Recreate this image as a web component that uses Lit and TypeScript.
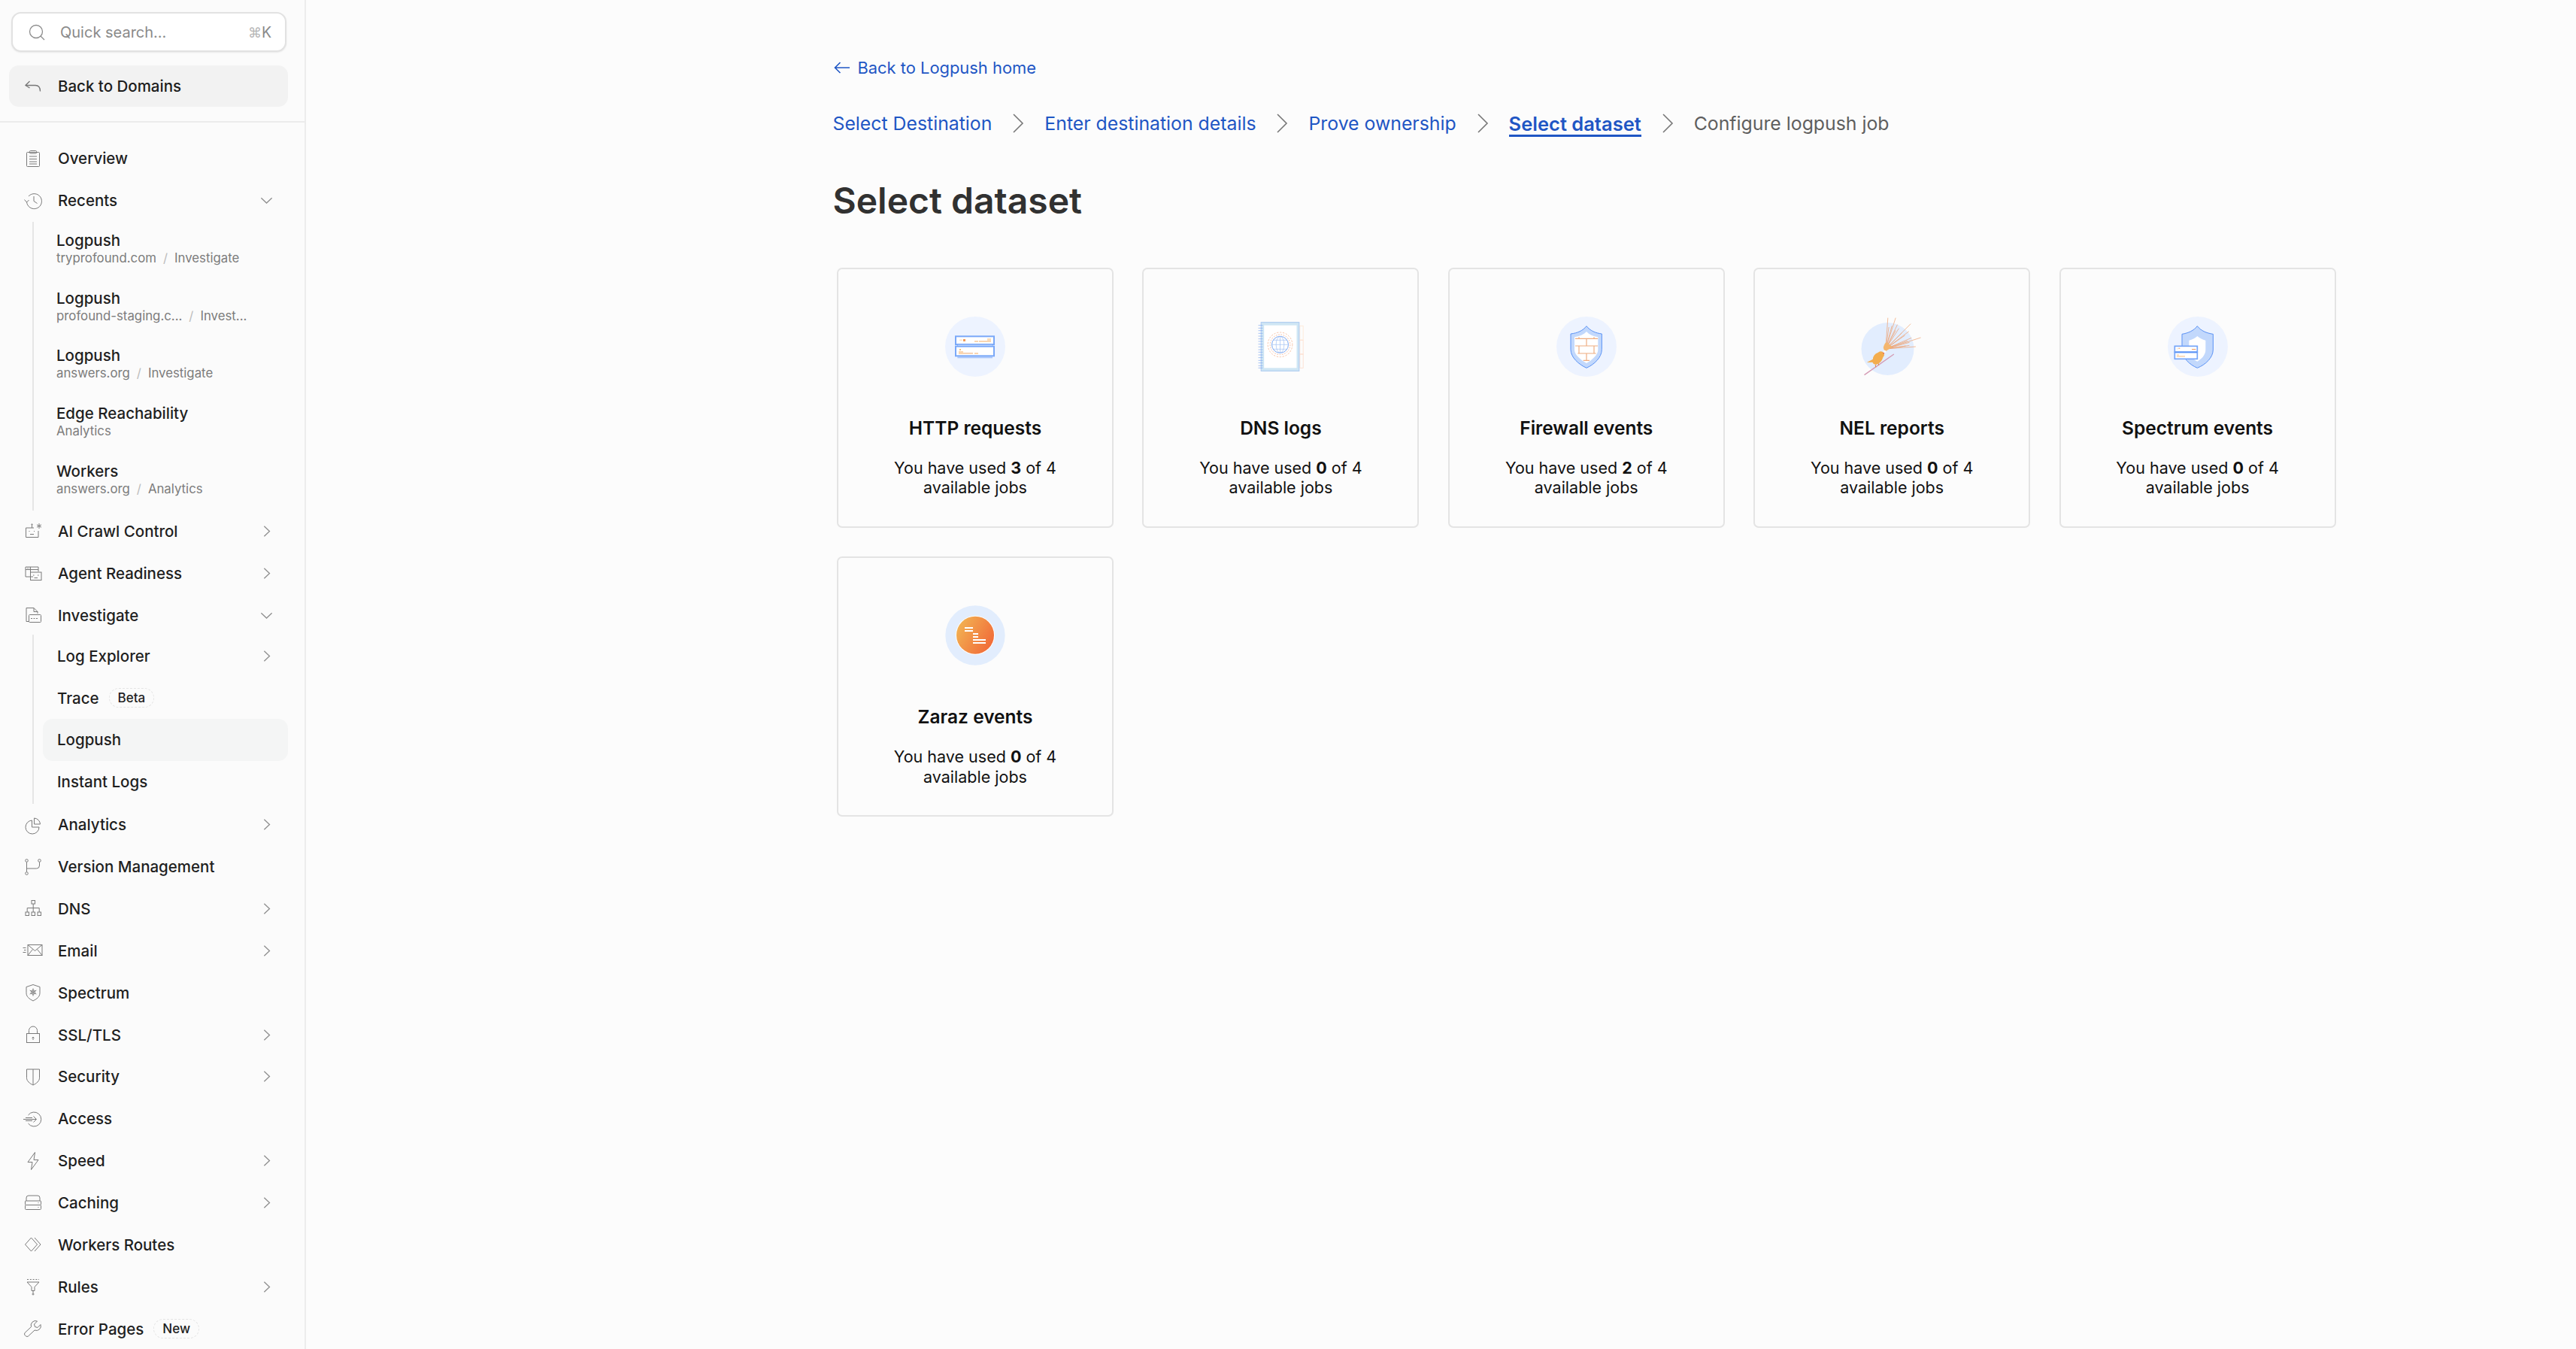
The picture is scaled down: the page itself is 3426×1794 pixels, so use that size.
import { LitElement, html, css, svg } from "lit";
import { customElement } from "lit/decorators.js";

const ICONS: Record<string, any> = {
  overview: svg`<rect x="5.5" y="5.5" width="17" height="19" rx="1"/><rect x="9.5" y="3.5" width="9" height="3.5" rx="1"/><path d="M9 11h10M9 14.5h10M9 18h10M9 21h10"/>`,
  recents: svg`<path d="M5.5 15.5A10 10 0 1 0 8 8"/><path d="M2.5 12.5l3 3.5 3-3"/><path d="M15 8v6.5l4.5 3"/>`,
  ai: svg`<path d="M15 9H4.5v12.5H21V13"/><path d="M12.5 5v4"/><circle cx="12.5" cy="4.5" r=".7"/><path d="M8.5 13.5h1M15 13.5h1M10 17.5h5"/><path d="M22 3v7M19 4.8l6 3.4M25 4.8l-6 3.4"/>`,
  agent: svg`<path d="M14 19H4V6h17v6"/><path d="M4 9.5h17"/><path d="M6 7.8h4" stroke-dasharray="1 1"/><rect x="10.500" y="13" width="14.500" height="10.500"/><path d="M14 17h1.500M20 17h1.500M15.500 20.500h4.500"/><path d="M10.500 6v7"/>`,
  investigate: svg`<path d="M9 22.500H5V4.500h10l5 5V12"/><path d="M15 4.500v5h5"/><rect x="8.500" y="13.500" width="16" height="10" rx="1"/><path d="M11 18.500h9" stroke-dasharray="2 1.500"/>`,
  analytics: svg`<path d="M12.500 8A9 9 0 1 0 22 17H12.500z"/><path d="M15.500 5a8.500 8.500 0 0 1 8 8h-8z"/>`,
  version: svg`<circle cx="5.500" cy="5.500" r="1.800"/><circle cx="5.500" cy="22.500" r="1.800"/><circle cx="22.500" cy="5.500" r="1.800"/><path d="M5.500 7.500v13M5.500 16h13q4 0 4-4V7.500"/>`,
  dns: svg`<rect x="12" y="3.500" width="4.500" height="4.500"/><rect x="4" y="19" width="4.500" height="4.500"/><rect x="12" y="19" width="4.500" height="4.500"/><rect x="20" y="19" width="4.500" height="4.500"/><path d="M14.200 8v11M6.200 19v-5.500h16V19"/>`,
  email: svg`<rect x="7" y="6.500" width="19" height="14"/><path d="M7 6.500l9.500 8 9.500-8M7 20.500l6.500-8M26 20.500l-6.500-8"/><path d="M0.500 10.500h4M2 13.500h2.500M0.500 16.500h4"/>`,
  spectrum: svg`<path d="M14 3.500l9 3v8c0 5-4 8-9 10.500-5-2.500-9-5.500-9-10.500v-8z"/><path d="M14 8.500v10M9.700 11l8.600 5M18.300 11l-8.600 5" stroke-width="1"/><circle cx="14" cy="13.500" r="2.800" stroke-width=".8"/>`,
  ssl: svg`<rect x="5.500" y="12.500" width="17" height="12"/><path d="M8.500 12.500V8.500a5.500 5.500 0 0 1 11 0v4"/><path d="M14 21v-3.500"/><path d="M12.500 18.500l1.500-1.500 1.500 1.500" stroke-width="1"/>`,
  security: svg`<path d="M5.500 4h17v11.500c0 4-4 7.500-8.500 9.500-4.500-2-8.500-5.500-8.500-9.500z"/><path d="M14 4v21"/>`,
  access: svg`<path d="M7.500 9a9.500 9.500 0 1 1 0 11"/><path d="M1 14.500h17"/><path d="M14.500 10.500l4 4-4 4"/><path d="M4 12.500h9M4 16.500h9"/>`,
  speed: svg`<path d="M16.500 2.500L7 15.500h6l-1.500 10 9.500-13h-6z"/>`,
  caching: svg`<path d="M5 12V8q0-3 3-3h12q3 0 3 3v4"/><rect x="3.500" y="12" width="21" height="5.500" rx="1"/><rect x="3.500" y="17.500" width="21" height="6" rx="1"/><path d="M20.500 14.700h1M20.500 20.500h1"/>`,
  routes: svg`<path d="M11.500 5L3.500 14l8 9"/><path d="M11.500 5l8 9-8 9"/><path d="M16 5l8 9-8 9"/>`,
  rules: svg`<path d="M6 4.500h16" stroke-dasharray="2 1.800"/><path d="M6 8h16l-6 6.500v5h-4v-5z"/><path d="M14 19.500v6M12.500 24h3"/>`,
  error: svg`<path d="M24 8.500l-4 4-3.500-1-1-3.500 4-4a6 6 0 0 0-8 7.500L3 19.500q-1 1.500 0 3L4.500 24q1.500 1 3 0l8.500-8a6 6 0 0 0 8-7.500z"/>`,
};

const chevR = html`<svg class="chev" viewBox="0 0 24 24"><path d="M8 3.500l9 8.500-9 8.500"/></svg>`;
const chevD = html`<svg class="chev" viewBox="0 0 24 24"><path d="M3 8l9 8.500L21 8"/></svg>`;

function icon(name?: string) {
  if (!name) return html``;
  return html`<svg class="ic" viewBox="0 0 28 28">${ICONS[name]}</svg>`;
}

interface Row { label: string; icon?: string; arrow?: "r" | "d"; badge?: string; active?: boolean; }

function row(r: Row) {
  return html`<div class="row ${r.active ? "active" : ""}">
    ${icon(r.icon)}<span class="lbl">${r.label}</span>
    ${r.badge ? html`<span class="badge">${r.badge}</span>` : ""}
    ${r.arrow === "r" ? chevR : r.arrow === "d" ? chevD : ""}
  </div>`;
}

const recents = [
  ["Logpush", "tryprofound.com", "Investigate"],
  ["Logpush", "profound-staging.c...", "Invest..."],
  ["Logpush", "answers.org", "Investigate"],
  ["Edge Reachability", "Analytics", ""],
  ["Workers", "answers.org", "Analytics"],
];

const HTTP = svg`
  <svg viewBox="81 63 240 240" class="art">
    <circle cx="201" cy="183" r="120" fill="#edf3ff"/>
    <rect x="123" y="142" width="153" height="32" fill="#fff" stroke="#7aa8f8" stroke-width="6"/>
    <rect x="130" y="175" width="140" height="5" fill="#fff" stroke="#7aa8f8" stroke-width="2"/>
    <rect x="123" y="182" width="153" height="38" fill="#fff" stroke="#7aa8f8" stroke-width="6"/>
    <rect x="130" y="222" width="140" height="7" fill="#a9c6fb"/>
    <rect x="138" y="155" width="12" height="3" fill="#f9d5b0"/><rect x="153" y="153" width="9" height="9" fill="#f39a56"/>
    <rect x="198" y="159" width="15" height="6" fill="#f9d5b0"/><rect x="216" y="159" width="48" height="6" fill="#f9d5b0"/><rect x="249" y="150" width="15" height="10" fill="#fbdcb8"/>
    <rect x="138" y="192" width="6" height="6" fill="#f7c27c"/><rect x="135" y="201" width="18" height="12" fill="#f9d5b0"/><rect x="153" y="207" width="39" height="5" fill="#f4c9a6"/><rect x="198" y="207" width="15" height="6" fill="#f9d5b0"/>
  </svg>`;

const DNS = svg`
  <svg viewBox="70.500 63 240 240" class="art">
    <rect x="268" y="100" width="13" height="56" fill="none" stroke="#fde8d5" stroke-width="2.500"/>
    <rect x="268" y="157" width="13" height="56" fill="none" stroke="#fde0ce" stroke-width="2.500"/>
    <rect x="268" y="213" width="13" height="55" fill="none" stroke="#fcdccc" stroke-width="2.500"/>
    <rect x="113" y="86" width="152" height="194" fill="#cfe6f4" stroke="#a9c8f0" stroke-width="3"/>
    <rect x="125" y="98" width="130" height="170" fill="#fff"/>
    <path d="M102 98h18M102 109h18M102 119h18M102 130h18M102 141h18M102 152h18M102 162h18M102 173h18M102 184h18M102 195h18M102 205h18M102 216h18M102 227h18M102 238h18M102 248h18M102 259h18M102 268h18" stroke="#7ba6ee" stroke-width="2"/>
    <circle cx="189" cy="175" r="33" fill="none" stroke="#7ba6ee" stroke-width="3"/>
    <path d="M156 175h66M189 142v66M162 157h54M162 193h54" stroke="#9dbdf3" stroke-width="2"/>
    <ellipse cx="189" cy="175" rx="16" ry="33" fill="none" stroke="#9dbdf3" stroke-width="2"/>
    <circle cx="189" cy="175" r="40" fill="none" stroke="#f8b99a" stroke-width="3" stroke-dasharray="5 5"/>
    <circle cx="189" cy="175" r="49" fill="none" stroke="#f8c5a8" stroke-width="3" stroke-dasharray="7 5"/>
  </svg>`;

const FIREWALL = svg`
  <svg viewBox="60 63 240 240" class="art">
    <circle cx="180" cy="183" r="120" fill="#edf3ff"/>
    <path d="M180 101c14 18 36 28 61 31v62c0 32-30 60-61 74-31-14-63-42-63-74v-62c27-3 49-13 63-31z" fill="#c2d8fc" stroke="#5a92f5" stroke-width="3"/>
    <path d="M180 123c11 12 26 19 46 22v50c0 22-24 41-46 54-22-13-48-32-48-54v-50c20-3 37-10 48-22z" fill="#fff"/>
    <path d="M135 151h90M135 180h90M145 210h73M167 238h25M150 145v6M210 145v6M180 151v29M150 180v30M210 180v30M180 210v28" stroke="#eeac80" stroke-width="3.500" fill="none"/>
  </svg>`;

const rays = [[184,68],[215,68],[188,105],[200,100],[222,95],[215,118],[228,110],[275,92],[268,122],[240,128],[252,138],[315,147],[278,148],[262,160],[270,166],[295,183],[270,178],[255,180]];
const NEL = svg`
  <svg viewBox="79.500 63 240 240" class="art">
    <circle cx="183" cy="192" r="105" fill="#e2edfe"/>
    ${rays.map(([x, y]) => svg`<line x1="175" y1="192" x2="${x}" y2="${y}" stroke="#ef9a63" stroke-width="2"/>`)}
    <path d="M166 185q6-18 12-20l22 18q-10 10-24 18q-10-4-10-16z" fill="#f4b66e"/>
    <line x1="90" y1="296" x2="208" y2="213" stroke="#d49ab4" stroke-width="4"/>
    <path d="M100 246l24-13q2-20 20-26q8-8 18-4q9 6 7 16q-5 5-8 16q-6 14-24 20l-10-3q-2-5-5-7z" fill="#f3ad4e"/>
    <circle cx="167" cy="209" r="3" fill="#e76f51"/>
    <rect x="167" y="198" width="9" height="9" fill="#fff" opacity=".8"/>
    <path d="M134 255l2 10M146 250l2 8" stroke="#e08a3c" stroke-width="3"/>
  </svg>`;

const SPECTRUM = svg`
  <svg viewBox="69 63 240 240" class="art">
    <circle cx="189" cy="183" r="120" fill="#edf3ff"/>
    <path d="M187 101c14 18 36 28 63 32v62c0 32-30 60-63 73-31-13-61-41-61-73v-62c25-4 47-14 61-32z" fill="#c2d8fc" stroke="#5a92f5" stroke-width="3"/>
    <path d="M187 141c11 9 20 13 33 17v38c0 22-18 38-33 46-18-8-33-24-33-46v-38c13-4 24-8 33-17z" fill="#fff"/>
    <rect x="97" y="181" width="90" height="24" fill="#fff" stroke="#74a4f8" stroke-width="5"/>
    <rect x="97" y="205" width="90" height="27" fill="#fff" stroke="#74a4f8" stroke-width="5"/>
    <rect x="98" y="203" width="88" height="5" fill="#5a92f5"/>
    <rect x="106" y="189" width="3" height="5" fill="#ddd"/><rect x="112" y="188" width="6" height="4" fill="#f6b784"/><rect x="165" y="192" width="16" height="3" fill="#ef9a5d"/>
    <rect x="105" y="214" width="9" height="4" fill="#f9d5b0"/><rect x="105" y="219" width="33" height="5" fill="#f9d5b0"/>
  </svg>`;

const ZARAZ = svg`
  <svg viewBox="81 75 240 240" class="art">
    <defs><linearGradient id="zg" x1="0" y1="0.150" x2="1" y2="0.700"><stop offset="0" stop-color="#f2b654"/><stop offset="1" stop-color="#f16a38"/></linearGradient></defs>
    <circle cx="201" cy="195" r="119" fill="#e2edfd"/>
    <circle cx="201" cy="194" r="78" fill="#fff"/>
    <circle cx="201" cy="194" r="75" fill="url(#zg)"/>
    <g fill="#fff"><rect x="159" y="162" width="33" height="6"/><rect x="159" y="174" width="33" height="6"/><rect x="192" y="186" width="21" height="6"/><rect x="192" y="198" width="21" height="6"/><rect x="192" y="210" width="51" height="6"/><rect x="192" y="222" width="51" height="6"/></g>
  </svg>`;

const cards = [
  ["HTTP requests", 3, HTTP],
  ["DNS logs", 0, DNS],
  ["Firewall events", 2, FIREWALL],
  ["NEL reports", 0, NEL],
  ["Spectrum events", 0, SPECTRUM],
  ["Zaraz events", 0, ZARAZ],
] as const;

const steps = ["Select Destination", "Enter destination details", "Prove ownership", "Select dataset", "Configure logpush job"];

@customElement("app-root")
export class AppRoot extends LitElement {
  static styles = css`
    :host { display: flex; width: 3426px; height: 1794px; overflow: hidden; background: #fcfcfc; font-family: Inter, "Noto Sans", sans-serif; color: #1d1d1d; }
    .side { width: 407px; flex: none; box-sizing: border-box; border-right: 2px solid #ececec; background: #fbfbfb; height: 1794px; overflow: hidden; }
    .top { box-sizing: border-box; height: 163px; padding: 16px 22px 0 12px; border-bottom: 2px solid #ececec; }
    .search { box-sizing: border-box; margin: 0 2px 0 3px; height: 53px; background: #fff; border: 2px solid #e2e2e2; border-radius: 13px; box-shadow: 0 1px 2px rgba(0,0,0,.08); display: flex; align-items: center; padding: 0 18px 0 20px; color: #8a8a8a; font-size: 20px; }
    .search svg { width: 24px; height: 24px; fill: none; stroke: #8c8c8c; stroke-width: 1.3; flex: none; margin-right: 19px; }
    .search .q { flex: 1; }
    .kbd { font-size: 19.500px; color: #8a8a8a; white-space: nowrap; }
    .kbd i { font-style: normal; font-family: "DejaVu Sans", sans-serif; color: #b4b4b4; font-size: 18px; }
    .back { box-sizing: border-box; height: 55px; margin-top: 18px; background: #f2f2f2; border-radius: 13px; display: flex; align-items: center; padding-left: 20px; font-size: 20.500px; font-weight: 500; }
    .back svg { width: 24px; height: 24px; fill: none; stroke: #777; stroke-width: 1.3; margin-right: 21px; flex: none; }
    .nav { padding: 20px 22px 0 0; }
    .row { box-sizing: border-box; height: 55.870px; display: flex; align-items: center; padding-left: 30px; font-size: 20.500px; font-weight: 500; position: relative; color: #1f1f1f; }
    .row .lbl { white-space: nowrap; }
    .ic { width: 28px; height: 28px; flex: none; margin-right: 19px; fill: none; stroke: #7a7a7a; stroke-width: 1; }
    .chev { width: 19px; height: 19px; fill: none; stroke: #8f8f8f; stroke-width: 1.700; position: absolute; right: 19px; top: 50%; margin-top: -9.500px; }
    .badge { box-sizing: border-box; margin-left: 13px; height: 26px; padding: 0 11px; border: 1.500px dashed #e4e4e4; border-radius: 13px; font-size: 17px; display: flex; align-items: center; color: #1f1f1f; }
    .tree { margin-left: 43px; border-left: 2px solid #e6e6e6; }
    .rec { box-sizing: border-box; height: 76.800px; padding: 12px 0 0 30px; }
    .rec .n { font-size: 20.500px; font-weight: 500; line-height: 25px; color: #1f1f1f; white-space: nowrap; }
    .rec .s { font-size: 16.800px; line-height: 23px; color: #7c7c7c; white-space: nowrap; }
    .rec .s b { font-weight: 400; color: #bdbdbd; margin: 0 9px; }
    .t2 { margin-top: -2px; height: 224.500px; }
    .t2 .row { margin-left: 12px; padding-left: 19px; }
    .t2 .row.active { background: #f4f5f5; border-radius: 13px; height: 55.500px; }
    .main { flex: 1; padding: 70px 0 0 700.500px; box-sizing: border-box; }
    .link { height: 40px; display: flex; align-items: center; color: #1f56c4; font-size: 21.900px; }
    .link svg { width: 24px; height: 24px; fill: none; stroke: #1f56c4; stroke-width: 1.600; margin-right: 9px; }
    .steps { display: flex; align-items: center; height: 50px; margin-top: 29px; font-size: 24.800px; color: #1f56c4; white-space: nowrap; }
    .steps svg { width: 16px; height: 28px; margin: 0 27px; fill: none; stroke: #777; stroke-width: 1.600; flex: none; }
    .steps .on { font-size: 25.500px; font-weight: 600; line-height: 28px; border-bottom: 3px solid #1f56c4; margin-top: 5px; }
    .steps .off { color: #5f5f5f; }
    h1 { margin: 43px 0 0; height: 70px; line-height: 70px; font-size: 48px; font-weight: 600; color: #313131; }
    .grid { display: grid; grid-template-columns: repeat(5, 368px); gap: 38.400px; margin: 54px 0 0 5.500px; }
    .card { box-sizing: border-box; height: 346px; border: 2px solid #e4e4e4; border-radius: 7px; display: flex; flex-direction: column; align-items: center; padding-top: 63px; text-align: center; color: #111; }
    .art { width: 80px; height: 80px; overflow: visible; display: block; flex: none; }
    .t { font-size: 24.500px; font-weight: 600; margin-top: 50.500px; line-height: 34px; }
    .d { font-size: 21.500px; line-height: 26.250px; margin-top: 23.500px; width: 260px; }
    .d b { font-weight: 700; }
  `;

  render() {
    return html`
      <aside class="side">
        <div class="top">
          <div class="search">
            <svg viewBox="0 0 24 24"><circle cx="11" cy="11" r="8.500"/><path d="M17 17l5 5"/></svg>
            <span class="q">Quick search...</span><span class="kbd"><i>⌘</i>K</span>
          </div>
          <div class="back">
            <svg viewBox="0 0 24 24"><path d="M7.500 5L2 10.500l5.500 3.500"/><path d="M2 10.500h13c4 0 6.500 3 6.500 8"/></svg>
            Back to Domains
          </div>
        </div>
        <nav class="nav">
          ${row({ label: "Overview", icon: "overview" })}
          ${row({ label: "Recents", icon: "recents", arrow: "d" })}
          <div class="tree t1">
            ${recents.map(([n, a, b]) => html`<div class="rec"><div class="n">${n}</div><div class="s">${a}${b ? html`<b>/</b>${b}` : ""}</div></div>`)}
          </div>
          ${row({ label: "AI Crawl Control", icon: "ai", arrow: "r" })}
          ${row({ label: "Agent Readiness", icon: "agent", arrow: "r" })}
          ${row({ label: "Investigate", icon: "investigate", arrow: "d" })}
          <div class="tree t2">
            ${row({ label: "Log Explorer", arrow: "r" })}
            ${row({ label: "Trace", badge: "Beta" })}
            ${row({ label: "Logpush", active: true })}
            ${row({ label: "Instant Logs" })}
          </div>
          ${row({ label: "Analytics", icon: "analytics", arrow: "r" })}
          ${row({ label: "Version Management", icon: "version" })}
          ${row({ label: "DNS", icon: "dns", arrow: "r" })}
          ${row({ label: "Email", icon: "email", arrow: "r" })}
          ${row({ label: "Spectrum", icon: "spectrum" })}
          ${row({ label: "SSL/TLS", icon: "ssl", arrow: "r" })}
          ${row({ label: "Security", icon: "security", arrow: "r" })}
          ${row({ label: "Access", icon: "access" })}
          ${row({ label: "Speed", icon: "speed", arrow: "r" })}
          ${row({ label: "Caching", icon: "caching", arrow: "r" })}
          ${row({ label: "Workers Routes", icon: "routes" })}
          ${row({ label: "Rules", icon: "rules", arrow: "r" })}
          ${row({ label: "Error Pages", icon: "error", badge: "New" })}
        </nav>
      </aside>
      <main class="main">
        <div class="link"><svg viewBox="0 0 24 24"><path d="M22 12H3M9.500 5L2.500 12l7 7"/></svg>Back to Logpush home</div>
        <div class="steps">
          ${steps.map((s, i) => html`
            <span class="${i === 3 ? "on" : i === 4 ? "off" : ""}">${s}</span>
            ${i < 4 ? html`<svg viewBox="0 0 16 28"><path d="M2 2l12 12L2 26"/></svg>` : ""}
          `)}
        </div>
        <h1>Select dataset</h1>
        <div class="grid">
          ${cards.map(([t, n, art]) => html`
            <div class="card">
              ${art}
              <div class="t">${t}</div>
              <div class="d">You have used <b>${n}</b> of 4 available jobs</div>
            </div>`)}
        </div>
      </main>
    `;
  }
}
